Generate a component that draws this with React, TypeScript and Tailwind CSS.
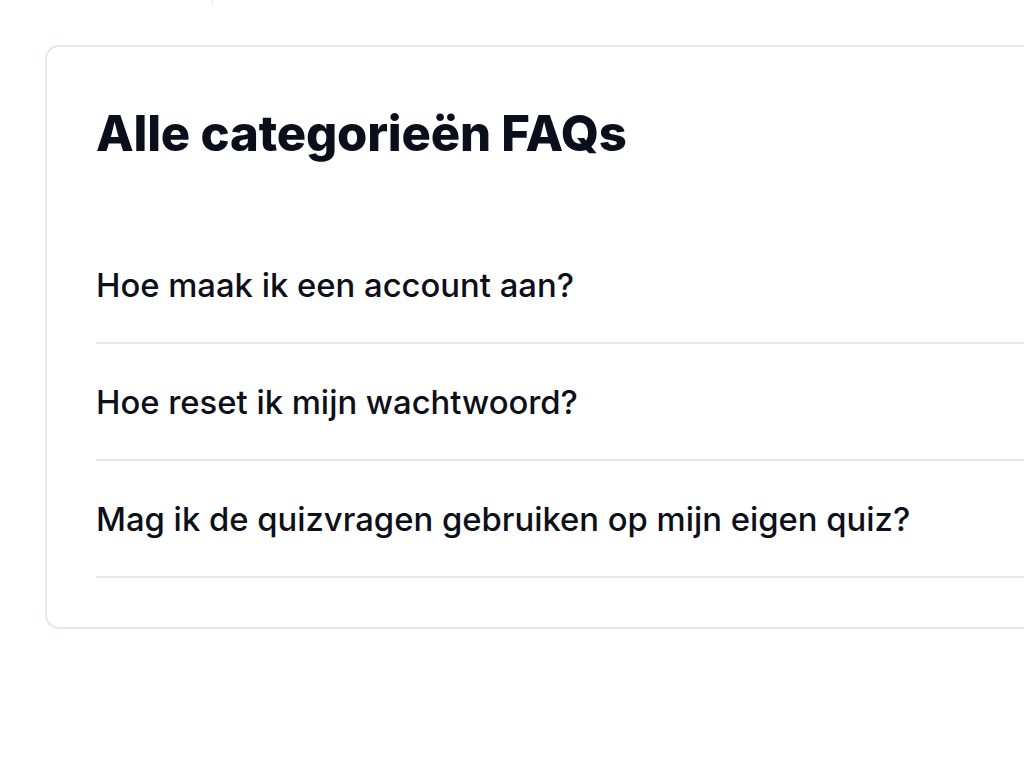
import React from 'react'

const faqs = [
  'Hoe maak ik een account aan?',
  'Hoe reset ik mijn wachtwoord?',
  'Mag ik de quizvragen gebruiken op mijn eigen quiz?',
]

export default function App() {
  return (
    <div
      className="min-h-screen w-full overflow-hidden bg-white"
      style={{ fontFamily: 'Inter, "Noto Sans", sans-serif' }}
    >
      <div className="h-[5px] w-full">
        <div className="ml-[212px] h-full w-px bg-[#e2e8f0]" />
      </div>

      <div className="ml-[45px] mt-[40px] w-[1100px] rounded-[14px] border-2 border-[#e4e9f0] bg-white pb-[49px] pl-[49px] pr-[49px] pt-[55px]">
        <h1 className="text-[49px] font-extrabold leading-[64px] tracking-[-0.2px] text-[#0b0f1c]">
          Alle categorieën FAQs
        </h1>

        <div className="mt-[61px]">
          {faqs.map((q) => (
            <div
              key={q}
              className="border-b-2 border-[#e4e9f0] pb-[37px] pt-[38px]"
            >
              <p className="text-[32.8px] font-medium leading-[40px] text-[#0d1019]">{q}</p>
            </div>
          ))}
        </div>
      </div>
    </div>
  )
}
